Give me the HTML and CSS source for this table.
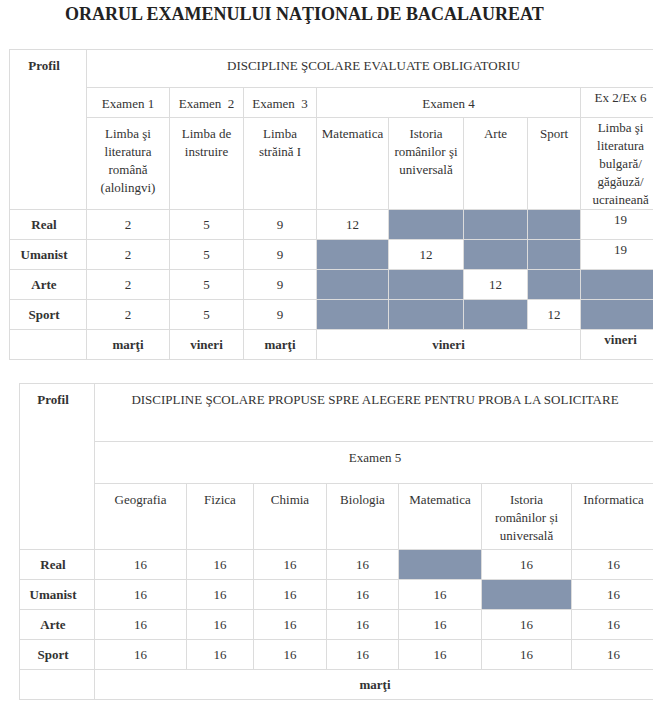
FILE: index.html
```html
<!DOCTYPE html>
<html lang="ro">
<head>
<meta charset="utf-8">
<title>Orarul examenului național de bacalaureat</title>
<link rel="stylesheet" href="styles.css">
</head>
<body>
<div class="page">
  <h1 class="title">ORARUL EXAMENULUI NAŢIONAL DE BACALAUREAT</h1>

  <table class="sched t1">
    <colgroup>
      <col class="c-prof1"><col class="c-e1"><col class="c-e2"><col class="c-e3">
      <col class="c-mat"><col class="c-ist"><col class="c-arte"><col class="c-sport"><col class="c-ex6">
    </colgroup>
    <tr class="r1">
      <th class="lbl" rowspan="3">Profil</th>
      <th colspan="8">DISCIPLINE ŞCOLARE EVALUATE OBLIGATORIU</th>
    </tr>
    <tr class="r2">
      <th>Examen 1</th>
      <th>Examen&nbsp; 2</th>
      <th>Examen&nbsp; 3</th>
      <th colspan="4">Examen 4</th>
      <th class="side">Ex 2/Ex 6</th>
    </tr>
    <tr class="r3">
      <th>Limba şi literatura română (alolingvi)</th>
      <th>Limba de instruire</th>
      <th>Limba străină I</th>
      <th>Matematica</th>
      <th>Istoria românilor şi universală</th>
      <th>Arte</th>
      <th>Sport</th>
      <th class="side">Limba şi literatura bulgară/ găgăuză/ ucraineană</th>
    </tr>
    <tr class="data">
      <td class="lbl">Real</td><td>2</td><td>5</td><td>9</td>
      <td>12</td><td class="shade"></td><td class="shade"></td><td class="shade"></td>
      <td class="side">19</td>
    </tr>
    <tr class="data">
      <td class="lbl">Umanist</td><td>2</td><td>5</td><td>9</td>
      <td class="shade"></td><td>12</td><td class="shade"></td><td class="shade"></td>
      <td class="side">19</td>
    </tr>
    <tr class="data">
      <td class="lbl">Arte</td><td>2</td><td>5</td><td>9</td>
      <td class="shade"></td><td class="shade"></td><td>12</td><td class="shade"></td>
      <td class="shade"></td>
    </tr>
    <tr class="data">
      <td class="lbl">Sport</td><td>2</td><td>5</td><td>9</td>
      <td class="shade"></td><td class="shade"></td><td class="shade"></td><td>12</td>
      <td class="shade"></td>
    </tr>
    <tr class="data">
      <td></td><td class="day">marţi</td><td class="day">vineri</td><td class="day">marţi</td>
      <td class="day" colspan="4">vineri</td>
      <td class="day side">vineri</td>
    </tr>
  </table>

  <table class="sched t2">
    <colgroup>
      <col class="d-prof"><col class="d-geo"><col class="d-fiz"><col class="d-chim">
      <col class="d-bio"><col class="d-mat"><col class="d-ist"><col class="d-inf">
    </colgroup>
    <tr class="q1">
      <th class="lbl" rowspan="3">Profil</th>
      <th colspan="7">DISCIPLINE ŞCOLARE PROPUSE SPRE ALEGERE PENTRU PROBA LA SOLICITARE</th>
    </tr>
    <tr class="q2">
      <th colspan="7">Examen 5</th>
    </tr>
    <tr class="q3">
      <th>Geografia</th>
      <th>Fizica</th>
      <th>Chimia</th>
      <th>Biologia</th>
      <th>Matematica</th>
      <th>Istoria românilor și universală</th>
      <th>Informatica</th>
    </tr>
    <tr class="data">
      <td class="lbl">Real</td><td>16</td><td>16</td><td>16</td><td>16</td>
      <td class="shade"></td><td>16</td><td>16</td>
    </tr>
    <tr class="data">
      <td class="lbl">Umanist</td><td>16</td><td>16</td><td>16</td><td>16</td>
      <td>16</td><td class="shade"></td><td>16</td>
    </tr>
    <tr class="data">
      <td class="lbl">Arte</td><td>16</td><td>16</td><td>16</td><td>16</td>
      <td>16</td><td>16</td><td>16</td>
    </tr>
    <tr class="data">
      <td class="lbl">Sport</td><td>16</td><td>16</td><td>16</td><td>16</td>
      <td>16</td><td>16</td><td>16</td>
    </tr>
    <tr class="data">
      <td></td><td class="day" colspan="7">marţi</td>
    </tr>
  </table>
</div>
</body>
</html>
```

FILE: styles.css
```css
html, body {
  margin: 0;
  padding: 0;
  background: #ffffff;
  overflow-x: hidden;
}

body {
  font-family: "Liberation Serif", "Times New Roman", serif;
  color: #333333;
}

.page {
  width: 653px;
  overflow: hidden;
}

.title {
  margin: 4px 0 24px 65px;
  font-family: "Liberation Serif", "Times New Roman", serif;
  font-size: 18px;
  line-height: 21px;
  font-weight: bold;
  color: #222222;
  white-space: nowrap;
}

.sched {
  border-collapse: collapse;
  table-layout: fixed;
  font-family: "Liberation Serif", "Times New Roman", serif;
  font-size: 13px;
  line-height: 18px;
  color: #333333;
}

.sched th,
.sched td {
  border: 1px solid #dcdcdc;
  padding: 7px 4px 0;
  text-align: center;
  vertical-align: top;
  font-family: "Liberation Serif", "Times New Roman", serif;
  font-weight: normal;
}

.sched .lbl {
  font-weight: bold;
  padding-right: 12px;
}

.sched tr.data td {
  vertical-align: middle;
  padding-top: 0;
  padding-bottom: 0;
}

.sched th.side,
.sched tr.data td.side {
  vertical-align: top;
  padding-top: 1px;
  padding-bottom: 0;
}

.sched td.day {
  font-weight: bold;
}

.sched td.shade {
  background: #8595ae;
}

/* table 1 */
.t1 {
  margin-left: 9px;
  width: 651px;
}
.c-prof1 { width: 77px; }
.c-e1 { width: 83px; }
.c-e2 { width: 74px; }
.c-e3 { width: 73px; }
.c-mat { width: 72px; }
.c-ist { width: 75px; }
.c-arte { width: 64px; }
.c-sport { width: 53px; }
.c-ex6 { width: 80px; }

.t1 .r1 { height: 38px; }
.t1 .r2 { height: 30px; }
.t1 .r3 { height: 90px; }
.sched tr.data { height: 30px; }

/* table 2 */
.t2 {
  margin: 23px 0 0 19px;
  width: 636px;
}
.d-prof { width: 75px; }
.d-geo { width: 92px; }
.d-fiz { width: 67px; }
.d-chim { width: 73px; }
.d-bio { width: 72px; }
.d-mat { width: 83px; }
.d-ist { width: 90px; }
.d-inf { width: 84px; }

.t2 .q1 { height: 58px; }
.t2 .q2 { height: 42px; }
.t2 .q3 { height: 66px; }
```
